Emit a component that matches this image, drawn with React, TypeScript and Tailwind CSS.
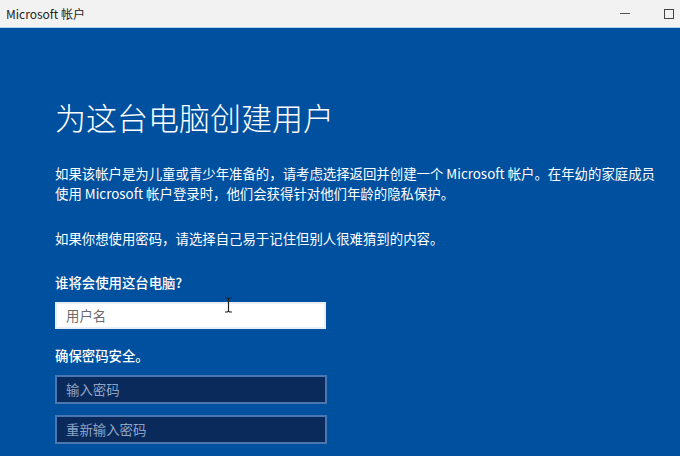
import React from 'react';

const font = { fontFamily: '"Noto Sans CJK SC", "Noto Sans", sans-serif' };

const App: React.FC = () => {
  return (
    <div
      className="relative flex h-[456px] w-[680px] flex-col overflow-hidden bg-[#0050a0] text-white"
      style={font}
    >
      {/* title bar */}
      <div className="flex h-[28px] shrink-0 items-center border-b border-[#a9d6ee] bg-[#f2f2f2] pl-[6px] pr-[6px] text-[12px] text-[#222]">
        <span>Microsoft 帐户</span>
        <div className="ml-auto flex items-center gap-[34px]">
          <div className="h-px w-[10px] bg-[#555]" />
          <div className="h-[10px] w-[10px] border border-[#444]" />
        </div>
      </div>

      <div className="flex flex-col pl-[55px]">
        <h1 className="mt-[69px] text-[31px] font-light leading-[40px]">为这台电脑创建用户</h1>

        <p className="mt-[26px] text-[13.4px] leading-[20px]">
          如果该帐户是为儿童或青少年准备的，请考虑选择返回并创建一个 Microsoft 帐户。在年幼的家庭成员
          <br />
          使用 Microsoft 帐户登录时，他们会获得针对他们年龄的隐私保护。
        </p>

        <p className="mt-[25px] text-[13.4px] leading-[20px]">
          如果你想使用密码，请选择自己易于记住但别人很难猜到的内容。
        </p>

        <label className="mt-[24px] text-[13.4px] font-medium leading-[20px]">谁将会使用这台电脑?</label>
        <div className="mt-[10px] flex h-[27px] w-[271px] items-center border-2 border-[#e8eef6] bg-white pl-[9px] text-[13.4px] text-[#6b6b6b]">
          用户名
        </div>

        <label className="mt-[16px] text-[13.4px] font-medium leading-[20px]">确保密码安全。</label>
        <div className="mt-[10px] flex h-[29px] w-[272px] items-center border-2 border-[#4a77b0] bg-[#0a2a5c] pl-[9px] text-[13.4px] text-[#8ea4c4]">
          输入密码
        </div>
        <div className="mt-[11px] flex h-[29px] w-[272px] items-center border-2 border-[#4a77b0] bg-[#0a2a5c] pl-[9px] text-[13.4px] text-[#8ea4c4]">
          重新输入密码
        </div>
      </div>

      {/* mouse I-beam cursor */}
      <svg className="absolute left-[224px] top-[297px]" width="9" height="16" viewBox="0 0 9 16">
        <path d="M1 1h2.5L4.5 2 5.5 1H8M4.5 2v12M1 15h2.5l1-1 1 1H8" fill="none" stroke="#222" strokeWidth="1.2" />
      </svg>
    </div>
  );
};

export default App;
